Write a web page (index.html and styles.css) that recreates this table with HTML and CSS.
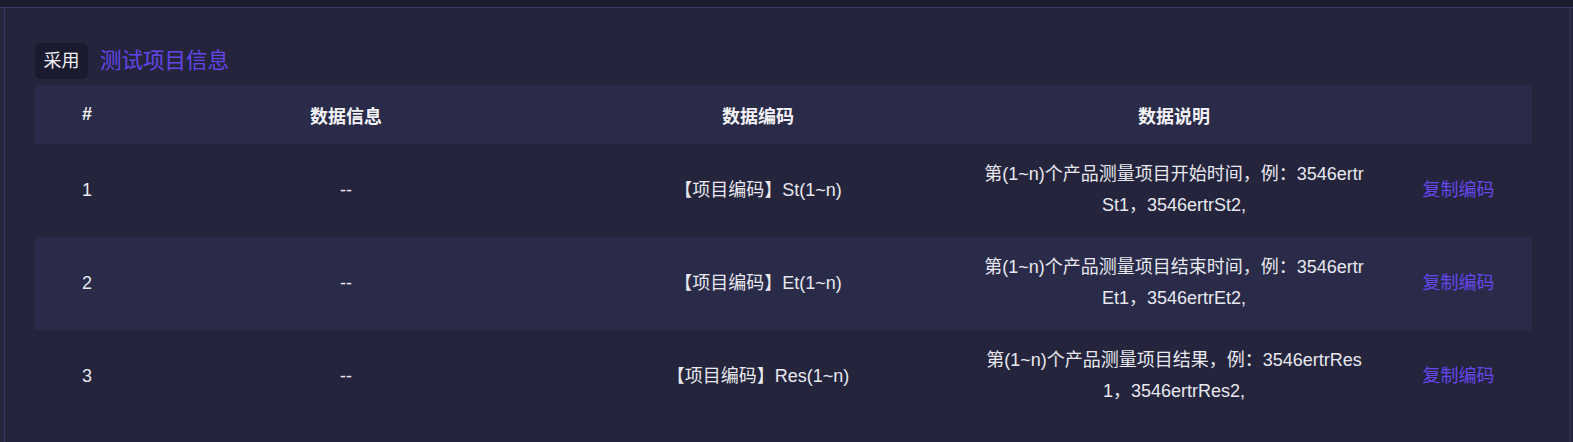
FILE: index.html
```html
<!DOCTYPE html>
<html lang="zh-CN">
<head>
<meta charset="utf-8">
<title>测试项目信息</title>
<link rel="stylesheet" href="styles.css">
</head>
<body>
<div class="topbar"></div>
<div class="panel">
  <div class="section-head">
    <span class="tag">采用</span>
    <span class="title">测试项目信息</span>
  </div>
  <table class="data-table">
    <colgroup>
      <col class="c-idx"><col class="c-info"><col class="c-code"><col class="c-desc"><col class="c-act">
    </colgroup>
    <thead>
      <tr><th>#</th><th>数据信息</th><th>数据编码</th><th>数据说明</th><th></th></tr>
    </thead>
    <tbody>
      <tr>
        <td>1</td><td>--</td><td>【项目编码】St(1~n)</td>
        <td class="desc">第(1~n)个产品测量项目开始时间，例：3546ertrSt1，3546ertrSt2,</td>
        <td><a class="link">复制编码</a></td>
      </tr>
      <tr class="alt">
        <td>2</td><td>--</td><td>【项目编码】Et(1~n)</td>
        <td class="desc">第(1~n)个产品测量项目结束时间，例：3546ertrEt1，3546ertrEt2,</td>
        <td><a class="link">复制编码</a></td>
      </tr>
      <tr>
        <td>3</td><td>--</td><td>【项目编码】Res(1~n)</td>
        <td class="desc">第(1~n)个产品测量项目结果，例：3546ertrRes1，3546ertrRes2,</td>
        <td><a class="link">复制编码</a></td>
      </tr>
    </tbody>
  </table>
</div>
</body>
</html>
```

FILE: styles.css
```css
html, body {
  margin: 0;
  padding: 0;
}
body {
  background: #24253c;
  font-family: "Liberation Sans", "Noto Sans CJK SC", sans-serif;
  color: #e8e8ee;
  height: 442px;
  overflow: hidden;
}
.topbar {
  height: 7px;
  background: #1b1c2e;
  border-bottom: 1px solid #3a3c63;
}
.panel {
  margin: 0 2px 0 4px;
  border-left: 1px solid #34366a;
  border-right: 1px solid #2e3058;
  background: #24253c;
  padding: 35px 30px 0 30px;
  height: 434px;
  box-sizing: border-box;
}
.section-head {
  display: flex;
  align-items: center;
  height: 36px;
  margin-bottom: 6px;
}
.tag {
  display: inline-block;
  height: 36px;
  line-height: 36px;
  padding: 0 8.5px;
  font-size: 18px;
  background: #1a1b2f;
  color: #f0f0f4;
  border-radius: 5px;
}
.title {
  margin-left: 12px;
  font-size: 21.5px;
  line-height: 36px;
  color: #6445ea;
}
.data-table {
  width: 1497px;
  border-collapse: collapse;
  table-layout: fixed;
  font-size: 18px;
}
.c-idx { width: 104px; }
.c-info { width: 414px; }
.c-code { width: 410px; }
.c-desc { width: 422px; }
.c-act { width: 147px; }
.data-table th {
  background: #292b48;
  height: 59px;
  padding: 0;
  font-weight: bold;
  color: #f2f2f6;
  text-align: center;
}
.data-table td {
  text-align: center;
  padding: 15px 20px 16px;
  line-height: 31px;
  color: #e8e8ee;
}
.data-table td:first-child {
  padding: 15px 0 16px;
}
.data-table tr.alt td {
  background: #292b48;
}
.data-table td.desc {
  word-break: break-all;
}
.link {
  color: #6547ea;
  cursor: pointer;
}
```
